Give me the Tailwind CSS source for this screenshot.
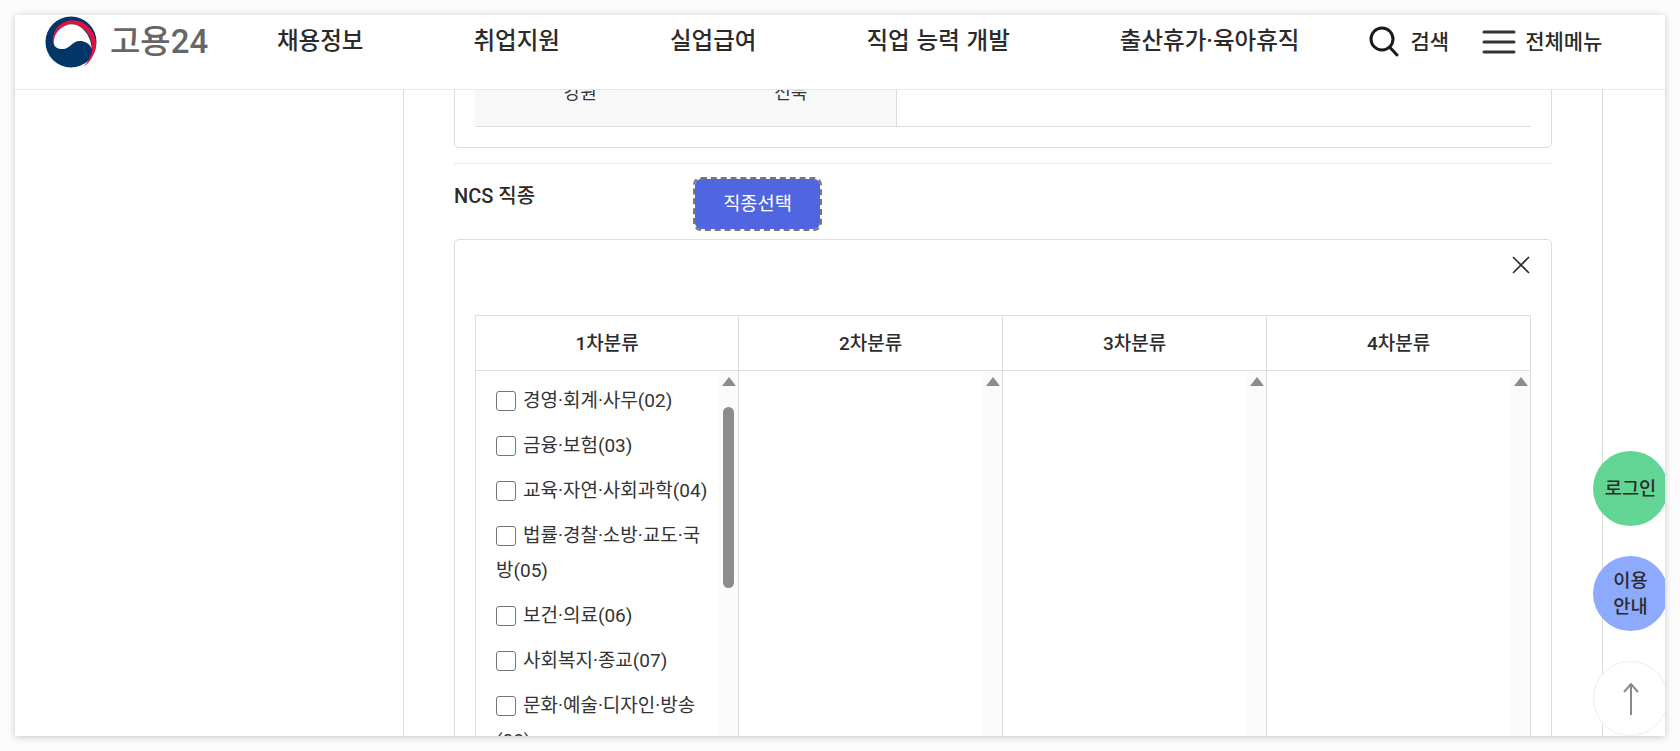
<!DOCTYPE html>
<html lang="ko">
<head>
    <meta charset="UTF-8">
    <meta name="viewport" content="width=device-width, initial-scale=1.0">
    <title>고용24</title>
    <script src="https://cdn.jsdelivr.net/npm/@tailwindcss/browser@4"></script>
</head>
<body class="bg-[#fcfcfc] font-['Roboto','Noto_Sans_CJK_KR',sans-serif] text-[#333] overflow-hidden">
<div class="h-[751px] p-[15px]">
    <div class="relative h-[721px] bg-white overflow-hidden shadow-[0_1px_7px_rgba(0,0,0,0.22)] flex flex-col">

        <!-- header -->
        <header class="h-[75px] shrink-0 bg-white border-b border-[#e8e8e8] flex items-start relative z-10">
            <div class="w-[262px] pl-[29px] pt-[1px] flex items-center shrink-0">
                <svg width="54" height="52" viewBox="0 0 54 54" class="shrink-0">
                    <circle cx="27" cy="27" r="26.5" fill="#003668"/>
                    <path d="M8 28C7 14 17 4.500 29 4.500C43 4.500 53 17 53 29C53 38 47 48 40 53C45 47 49 40 49 33C49 19 38 8.500 28 8.500C18 8.500 9 17 9 28Z" fill="#e0123f"/>
                    <path d="M9 28C9 17 18 8.500 28 8.500C38 8.500 48 20 48.500 34C46 28 41 26 36 26C29 26 27 32 21 34C15 35 9.500 33 9 28Z" fill="#fff"/>
                </svg>
                <span class="ml-[12px] text-[33px] leading-[50px] font-medium text-[#666] whitespace-nowrap">고용24</span>
            </div>
            <nav class="flex gap-[110px] pt-[10px] text-[23.5px] leading-[32px] font-medium text-[#2b2b2b] whitespace-nowrap [word-spacing:1px]">
                <a>채용정보</a>
                <a>취업지원</a>
                <a>실업급여</a>
                <a>직업 능력 개발</a>
                <a>출산휴가·육아휴직</a>
            </nav>
            <div class="ml-[70px] pt-[11px] flex items-center text-[#2b2b2b] font-medium whitespace-nowrap">
                <svg width="30" height="31" viewBox="0 0 30 31" fill="none" stroke="#1a1a1a" stroke-width="3" stroke-linecap="round">
                    <circle cx="13" cy="13" r="11"/>
                    <path d="M21 21.500L28 29"/>
                </svg>
                <span class="ml-[11px] text-[21px] leading-[28px]">검색</span>
                <svg class="ml-[33px]" width="34" height="24" viewBox="0 0 34 24" fill="none" stroke="#333" stroke-width="3" stroke-linecap="round">
                    <path d="M2 2H32M2 12H32M2 22H32"/>
                </svg>
                <span class="ml-[9px] text-[21px] leading-[28px]">전체메뉴</span>
            </div>
        </header>

        <!-- body -->
        <main class="flex flex-1 overflow-hidden">
            <div class="w-[389px] shrink-0 border-r border-[#ddd]"></div>
            <div class="w-[1199px] shrink-0 border-r border-[#ddd] px-[50px] -mt-[60px]">
                <div class="h-[118px] border border-[#ddd] rounded-[5px] px-[20px] flex flex-col justify-end pb-[20px]">
                    <div class="flex border-b border-[#ddd] h-[60px]">
                        <div class="w-[422px] bg-[#f8f8f8] border-r border-[#ddd] flex text-[18px] leading-[24px] pt-[14px]">
                            <span class="w-[211px] text-center">강원</span>
                            <span class="w-[211px] text-center">전북</span>
                        </div>
                    </div>
                </div>
                <div class="mt-[15px] border-t border-[#e8e8e8] pt-[14px] flex items-start">
                    <span class="w-[241px] mt-[1px] text-[20px] leading-[34px] font-medium text-[#2b2b2b] shrink-0">NCS 직종</span>
                    <button class="w-[125px] h-[50px] mt-[1px] bg-[#4f66e0] rounded-[6px] outline-2 outline-dashed outline-[#777] text-white text-[18.67px]">직종선택</button>
                </div>
                <div class="relative mt-[10px] border border-[#ddd] rounded-[5px] px-[20px] pt-[75px] h-[600px]">
                    <svg class="absolute right-[20px] top-[15px]" width="20" height="20" viewBox="0 0 20 20" fill="none" stroke="#2b2b2b" stroke-width="1.6">
                        <path d="M2 2L18 18M18 2L2 18"/>
                    </svg>
                    <div class="grid grid-cols-[263px_264px_264px_263px] border border-[#ddd] w-[1056px] h-[500px]">
                        <div class="h-[55px] pt-[2px] border-b border-r border-[#ddd] flex items-center justify-center text-[19px] font-medium text-[#2b2b2b]">1차분류</div>
                        <div class="h-[55px] pt-[2px] border-b border-r border-[#ddd] flex items-center justify-center text-[19px] font-medium text-[#2b2b2b]">2차분류</div>
                        <div class="h-[55px] pt-[2px] border-b border-r border-[#ddd] flex items-center justify-center text-[19px] font-medium text-[#2b2b2b]">3차분류</div>
                        <div class="h-[55px] pt-[2px] border-b border-[#ddd] flex items-center justify-center text-[19px] font-medium text-[#2b2b2b]">4차분류</div>

                        <!-- 1차분류 -->
                        <div class="relative border-r border-[#ddd] h-[445px] overflow-hidden">
                            <ul class="pl-[20px] pr-[24px] pt-[12px] text-[19px] leading-[35px] text-[#333] flex flex-col gap-[10px]">
                                <li><span class="inline-block align-[-4px] w-[20px] h-[20px] mr-[7px] border border-[#767676] rounded-[3px] bg-white"></span>경영·회계·사무(02)</li>
                                <li><span class="inline-block align-[-4px] w-[20px] h-[20px] mr-[7px] border border-[#767676] rounded-[3px] bg-white"></span>금융·보험(03)</li>
                                <li class="whitespace-nowrap"><span class="inline-block align-[-4px] w-[20px] h-[20px] mr-[7px] border border-[#767676] rounded-[3px] bg-white"></span>교육·자연·사회과학(04)</li>
                                <li><span class="inline-block align-[-4px] w-[20px] h-[20px] mr-[7px] border border-[#767676] rounded-[3px] bg-white"></span>법률·경찰·소방·교도·국방(05)</li>
                                <li><span class="inline-block align-[-4px] w-[20px] h-[20px] mr-[7px] border border-[#767676] rounded-[3px] bg-white"></span>보건·의료(06)</li>
                                <li><span class="inline-block align-[-4px] w-[20px] h-[20px] mr-[7px] border border-[#767676] rounded-[3px] bg-white"></span>사회복지·종교(07)</li>
                                <li><span class="inline-block align-[-4px] w-[20px] h-[20px] mr-[7px] border border-[#767676] rounded-[3px] bg-white"></span>문화·예술·디자인·방송(08)</li>
                            </ul>
                            <div class="absolute right-0 top-0 bottom-0 w-[19px] bg-[#fbfbfb]">
                                <div class="mx-auto mt-[6px] w-0 h-0 border-x-[7px] border-x-transparent border-b-[9px] border-b-[#8c8c8c]"></div>
                                <div class="absolute left-[4px] top-[36px] w-[11px] h-[181px] rounded-full bg-[#8c8c8c]"></div>
                            </div>
                        </div>
                        <!-- 2차분류 -->
                        <div class="relative border-r border-[#ddd] h-[445px]">
                            <div class="absolute right-0 top-0 bottom-0 w-[19px] bg-[#fbfbfb]">
                                <div class="mx-auto mt-[6px] w-0 h-0 border-x-[7px] border-x-transparent border-b-[9px] border-b-[#8c8c8c]"></div>
                            </div>
                        </div>
                        <!-- 3차분류 -->
                        <div class="relative border-r border-[#ddd] h-[445px]">
                            <div class="absolute right-0 top-0 bottom-0 w-[19px] bg-[#fbfbfb]">
                                <div class="mx-auto mt-[6px] w-0 h-0 border-x-[7px] border-x-transparent border-b-[9px] border-b-[#8c8c8c]"></div>
                            </div>
                        </div>
                        <!-- 4차분류 -->
                        <div class="relative h-[445px]">
                            <div class="absolute right-0 top-0 bottom-0 w-[19px] bg-[#fbfbfb]">
                                <div class="mx-auto mt-[6px] w-0 h-0 border-x-[7px] border-x-transparent border-b-[9px] border-b-[#8c8c8c]"></div>
                            </div>
                        </div>
                    </div>
                </div>
            </div>
        </main>

        <!-- floating buttons -->
        <div class="absolute left-[1578px] top-[436px] flex flex-col gap-[30px] z-20">
            <button class="w-[75px] h-[75px] rounded-full bg-[#62d594] text-[18.67px] font-medium text-[#2b2b2b]">로그인</button>
            <button class="w-[75px] h-[75px] rounded-full bg-[#8daaff] text-[18.67px] leading-[26px] font-medium text-[#2b2b2b]">이용<br>안내</button>
            <button class="w-[75px] h-[75px] rounded-full bg-white border border-[#eee] flex items-center justify-center">
                <svg width="16" height="32" viewBox="0 0 16 32" fill="none" stroke="#8a8a8a" stroke-width="2">
                    <path d="M8 1V32M1 9L8 1L15 9"/>
                </svg>
            </button>
        </div>
    </div>
</div>
</body>
</html>
